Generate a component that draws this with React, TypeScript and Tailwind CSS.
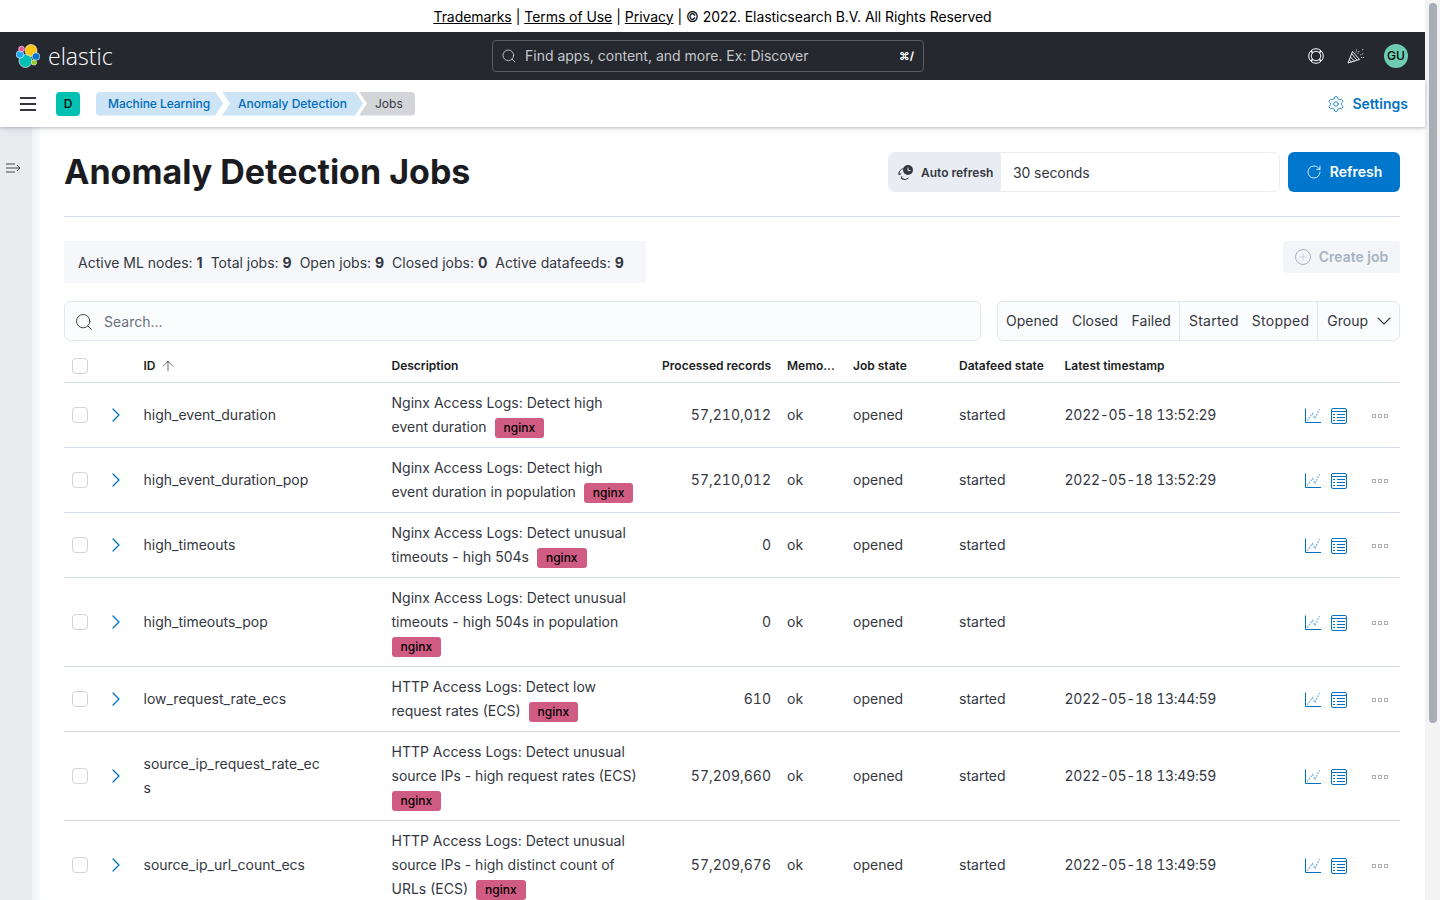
import { ArrowUp, ChevronDown, ChevronRight, Plus, RotateCw, Search, Settings } from 'lucide-react'

interface Job {
  id: string[]
  desc: string[]
  tagInline: boolean
  records: string
  timestamp: string
  height: string
}

const jobs: Job[] = [
  { id: ['high_event_duration'], desc: ['Nginx Access Logs: Detect high', 'event duration'], tagInline: true, records: '57,210,012', timestamp: '2022-05-18 13:52:29', height: 'h-[65px]' },
  { id: ['high_event_duration_pop'], desc: ['Nginx Access Logs: Detect high', 'event duration in population'], tagInline: true, records: '57,210,012', timestamp: '2022-05-18 13:52:29', height: 'h-[65px]' },
  { id: ['high_timeouts'], desc: ['Nginx Access Logs: Detect unusual', 'timeouts - high 504s'], tagInline: true, records: '0', timestamp: '', height: 'h-[65px]' },
  { id: ['high_timeouts_pop'], desc: ['Nginx Access Logs: Detect unusual', 'timeouts - high 504s in population'], tagInline: false, records: '0', timestamp: '', height: 'h-[89px]' },
  { id: ['low_request_rate_ecs'], desc: ['HTTP Access Logs: Detect low', 'request rates (ECS)'], tagInline: true, records: '610', timestamp: '2022-05-18 13:44:59', height: 'h-[65px]' },
  { id: ['source_ip_request_rate_ec', 's'], desc: ['HTTP Access Logs: Detect unusual', 'source IPs - high request rates (ECS)'], tagInline: false, records: '57,209,660', timestamp: '2022-05-18 13:49:59', height: 'h-[89px]' },
  { id: ['source_ip_url_count_ecs'], desc: ['HTTP Access Logs: Detect unusual', 'source IPs - high distinct count of', 'URLs (ECS)'], tagInline: true, records: '57,209,676', timestamp: '2022-05-18 13:49:59', height: 'h-[89px]' },
]

const columns = 'grid grid-cols-[40px_31.5px_248px_270.5px_125px_66px_106px_105.5px_233.5px_110px] items-center'

function Tag() {
  return <span className="mt-0.5 inline-block h-5 rounded-[3px] bg-[#d15c83] px-[9px] text-xs font-medium leading-5 text-black">nginx</span>
}

function Checkbox() {
  return <span className="ml-2 block h-4 w-4 rounded-[4px] border border-[#cfd3db] bg-white" />
}

function ElasticLogo() {
  return (
    <svg viewBox="0 0 24 24" className="h-6 w-6">
      <circle cx="15" cy="6.5" r="6" fill="#fec514" stroke="#fff" strokeWidth="0.6" />
      <circle cx="9.5" cy="17" r="6.5" fill="#00bfb3" stroke="#fff" strokeWidth="0.6" />
      <circle cx="4" cy="10.5" r="3.8" fill="#1ba9f5" stroke="#fff" strokeWidth="0.6" />
      <circle cx="5.5" cy="5" r="2.8" fill="#f04e98" stroke="#fff" strokeWidth="0.6" />
      <circle cx="20" cy="12.5" r="3.8" fill="#0077cc" stroke="#fff" strokeWidth="0.6" />
      <circle cx="18" cy="18.5" r="2.6" fill="#93c90e" stroke="#fff" strokeWidth="0.6" />
    </svg>
  )
}

function HelpIcon() {
  return (
    <svg viewBox="0 0 16 16" className="h-4 w-4" fill="none" stroke="#fff">
      <circle cx="8" cy="8" r="7.3" />
      <circle cx="8" cy="8" r="4.7" />
      <path d="M2.9 2.9L4.7 4.7M13.1 2.9L11.3 4.7M2.9 13.1L4.7 11.3M13.1 13.1L11.3 11.3" strokeWidth="1.6" />
    </svg>
  )
}

function NewsIcon() {
  return (
    <svg viewBox="0 0 18 16" className="h-4 w-[18px]" fill="none" stroke="#fff" strokeWidth="0.9">
      <path d="M1 15L5.5 3.5L12.5 11.5Z" />
      <path d="M3.4 9L7.5 13.2M4.7 5.7L9.8 12M2.2 12L4.6 14" />
      <path d="M9.5 1.5L9 4.5M12 3L10.5 6.5M16 1L15 3M13.5 7L16.5 5.5M14 9.5L17 9.5" strokeDasharray="1 1" />
    </svg>
  )
}

function ChartIcon() {
  return (
    <svg viewBox="0 0 16 16" className="h-4 w-4" fill="none">
      <path d="M0.5 0.5V14.5H16" stroke="#0071c2" />
      <path d="M2 13L7.5 5.5L10 10.5L14.5 1" stroke="#7fb8e1" strokeWidth="1.25" strokeDasharray="2 1" />
    </svg>
  )
}

function TableIcon() {
  return (
    <svg viewBox="0 0 16 16" className="h-4 w-4" fill="none" stroke="#0071c2">
      <rect x="0.5" y="0.5" width="15" height="15" rx="1.5" />
      <path d="M0.5 3.5H15.5M2 6.5H4M6 6.5H14M2 9.5H4M6 9.5H14M2 12.5H4M6 12.5H14" />
    </svg>
  )
}

function AutoRefreshIcon() {
  return (
    <svg viewBox="0 0 16 16" className="h-4 w-4" fill="none" stroke="#343741">
      <path d="M1 9.5A5.5 5.5 0 0 1 5.5 3.5M1 7.5L1.2 9.8L3.2 8.6M10.5 13A5.5 5.5 0 0 1 3.5 13.5M3.8 11.2L3.4 13.6L5.8 14" />
      <circle cx="10" cy="5" r="5" fill="#343741" stroke="none" />
      <path d="M10 2.5V5.5H12.5" stroke="#e9ebef" />
    </svg>
  )
}

function JobRow({ job }: { job: Job }) {
  return (
    <div className={`${columns} ${job.height} border-b border-[#d3dae6] text-sm text-[#343741]`}>
      <Checkbox />
      <ChevronRight className="h-6 w-6 text-[#0071c2]" strokeWidth={1.25} />
      <div className="pl-2 leading-6">
        {job.id.map((part) => (
          <div key={part}>{part}</div>
        ))}
      </div>
      <div className="pl-2 leading-6">
        {job.desc.map((line, i) => (
          <div key={line} className="flex h-6 items-center gap-2">
            {line}
            {job.tagInline && i === job.desc.length - 1 && <Tag />}
          </div>
        ))}
        {!job.tagInline && (
          <div className="flex h-6 items-center">
            <Tag />
          </div>
        )}
      </div>
      <div className="pr-2 text-right tabular-nums">{job.records}</div>
      <div className="pl-2">ok</div>
      <div className="pl-2">opened</div>
      <div className="pl-2">started</div>
      <div className="pl-2 tabular-nums tracking-[-0.26px]">{job.timestamp}</div>
      <div className="mt-0.5 flex items-center">
        <span className="ml-[15px] flex items-center gap-[10px]">
          <ChartIcon />
          <TableIcon />
        </span>
        <span className="ml-[25px] flex gap-[2px]">
          <i className="block h-1 w-1 border border-[#aeb1b8]" />
          <i className="block h-1 w-1 border border-[#aeb1b8]" />
          <i className="block h-1 w-1 border border-[#aeb1b8]" />
        </span>
      </div>
    </div>
  )
}

export default function App() {
  return (
    <div className="flex h-screen overflow-hidden bg-white font-['Inter',sans-serif] text-[#343741]">
      <div className="flex min-w-0 flex-1 flex-col">
        <div className="flex h-8 shrink-0 items-center justify-center gap-1 pt-px text-sm tracking-[-0.06px] text-black">
          <a className="underline">Trademarks</a>
          <span>|</span>
          <a className="underline">Terms of Use</a>
          <span>|</span>
          <a className="underline">Privacy</a>
          <span>|</span>
          <span>© 2022. Elasticsearch B.V. All Rights Reserved</span>
        </div>

        <header className="flex h-12 shrink-0 items-center bg-[#25282f] pl-4 pr-[17px] text-white">
          <div className="flex w-[476px] items-center gap-2">
            <ElasticLogo />
            <span className="font-['Open_Sans',sans-serif] text-[23px] font-light leading-none">elastic</span>
          </div>
          <div className="flex h-8 w-[432px] items-center rounded-[4px] border border-[#5a5d64] bg-[#25282f] pl-2 pr-[9px] text-sm text-[#c5c7cc]">
            <Search className="h-4 w-4 text-[#d4d6da]" strokeWidth={1.25} />
            <span className="ml-2 flex-1">Find apps, content, and more. Ex: Discover</span>
            <span className="pt-0.5 text-[11px] font-bold text-white">⌘/</span>
          </div>
          <div className="ml-auto flex items-center">
            <HelpIcon />
            <span className="ml-[23px]">
              <NewsIcon />
            </span>
            <span className="ml-[19px] flex h-6 w-6 items-center justify-center rounded-full bg-[#6dccb1] text-xs font-medium text-black">GU</span>
          </div>
        </header>

        <nav className="z-10 flex h-[47px] shrink-0 items-center bg-white pl-5 pr-[17px] shadow-[0_1px_3px_rgba(60,65,85,0.3),0_4px_8px_rgba(60,65,85,0.06)]">
          <span className="flex w-4 flex-col gap-[4px]">
            <i className="block h-0.5 bg-[#343741]" />
            <i className="block h-0.5 bg-[#343741]" />
            <i className="block h-0.5 bg-[#343741]" />
          </span>
          <span className="ml-5 flex h-6 w-6 items-center justify-center rounded-[4px] bg-[#00bfb3] text-xs font-medium text-black">D</span>
          <div className="ml-4 flex items-center text-xs font-medium">
            <span className="flex h-6 w-[127px] items-center rounded-l-[4px] bg-[#cce4f5] pl-3 tracking-[-0.05px] text-[#006bb8] [clip-path:polygon(0_0,calc(100%-8px)_0,100%_50%,calc(100%-8px)_100%,0_100%)]">Machine Learning</span>
            <span className="ml-[-1px] flex h-6 w-[141px] items-center bg-[#cce4f5] pl-4 text-[#006bb8] [clip-path:polygon(0_0,calc(100%-8px)_0,100%_50%,calc(100%-8px)_100%,0_100%,8px_50%)]">Anomaly Detection</span>
            <span className="ml-[-4px] flex h-6 w-[56px] items-center rounded-r-[4px] bg-[#d3d5d9] pl-4 font-normal text-[#343741] [clip-path:polygon(0_0,100%_0,100%_100%,0_100%,8px_50%)]">Jobs</span>
          </div>
          <div className="ml-auto flex items-center gap-[7px] text-sm font-semibold text-[#0071c2]">
            <Settings className="h-[18px] w-[18px]" strokeWidth={1.1} />
            Settings
          </div>
        </nav>

        <div className="flex min-h-0 flex-1">
          <aside className="flex w-8 shrink-0 justify-start bg-[#e9ebef] pl-[5px] pt-[35px]">
            <svg viewBox="0 0 16 12" className="h-3 w-4" fill="none" stroke="#343741" strokeWidth="0.9">
              <path d="M1 2H10M1 6H15M1 10H10M12 3L15 6L12 9" />
            </svg>
          </aside>
          <div className="w-2 shrink-0 bg-gradient-to-r from-[#f1f2f5] to-[#fafbfc]" />

          <main className="min-w-0 flex-1 overflow-hidden pl-6 pr-[25px] pt-[25px]">
            <div className="flex h-10 items-center justify-between">
              <h1 className="text-[34px] font-bold leading-10 text-[#1a1c21]">Anomaly Detection Jobs</h1>
              <div className="flex items-center gap-2">
                <div className="flex h-10 w-[392px] items-center rounded-[6px] border border-[#e9edf3] bg-white">
                  <span className="flex h-full w-[112px] items-center gap-[7px] rounded-l-[6px] bg-[#e9edf3] pl-[9px] pt-px text-xs font-semibold text-[#343741]">
                    <AutoRefreshIcon />
                    Auto refresh
                  </span>
                  <span className="pl-3 pt-px text-sm tracking-[-0.1px]">30 seconds</span>
                </div>
                <button className="flex h-10 w-28 items-center justify-center gap-2 rounded-[6px] bg-[#0077cc] text-sm font-semibold text-white">
                  <RotateCw className="h-4 w-4" strokeWidth={1.25} />
                  Refresh
                </button>
              </div>
            </div>

            <div className="mt-6 border-t border-[#d3dae6]" />

            <div className="mt-6 flex items-start justify-between">
              <div className="flex h-[42px] w-[582px] items-center gap-2 bg-[#f5f7fa] px-3.5 pt-0.5 text-sm text-[#343741]">
                <span>Active ML nodes: <b className="font-bold">1</b></span>
                <span>Total jobs: <b className="font-bold">9</b></span>
                <span>Open jobs: <b className="font-bold">9</b></span>
                <span>Closed jobs: <b className="font-bold">0</b></span>
                <span>Active datafeeds: <b className="font-bold">9</b></span>
              </div>
              <button className="flex h-8 w-[117px] items-center justify-center gap-2 rounded-[4px] bg-[#f3f5f8] text-sm font-semibold text-[#a8b2c2]">
                <span className="flex h-4 w-4 items-center justify-center rounded-full border border-[#a8b2c2]">
                  <Plus className="h-3 w-3" strokeWidth={1} />
                </span>
                Create job
              </button>
            </div>

            <div className="mt-[18px] flex gap-4">
              <div className="flex h-10 w-[917px] items-center rounded-[6px] border border-[#e3e7ef] bg-[#fbfcfd] pl-[9px] pt-0.5 text-sm text-[#69707d]">
                <Search className="h-5 w-5 text-[#343741]" strokeWidth={1.1} />
                <span className="ml-[10px]">Search...</span>
              </div>
              <div className="flex h-10 flex-1 items-center rounded-[6px] border border-[#e3e7ef] bg-[#fbfcfd] text-sm text-[#343741]">
                <div className="flex h-full items-center gap-[13.5px] border-r border-[#e3e7ef] pl-2 pr-2">
                  <span>Opened</span>
                  <span>Closed</span>
                  <span>Failed</span>
                </div>
                <div className="flex h-full items-center gap-[13px] border-r border-[#e3e7ef] pl-[9px] pr-2 tracking-[0.25px]">
                  <span>Started</span>
                  <span>Stopped</span>
                </div>
                <div className="flex flex-1 items-center justify-between pl-[9px] pr-[3px]">
                  <span>Group</span>
                  <ChevronDown className="h-6 w-6" strokeWidth={1.1} />
                </div>
              </div>
            </div>

            <div className={`${columns} mt-2 h-[34px] border-b border-[#d3dae6] text-xs font-semibold text-[#1a1c21]`}>
              <Checkbox />
              <span />
              <span className="flex items-center gap-1 pl-2">
                ID
                <ArrowUp className="h-4 w-4" strokeWidth={1} />
              </span>
              <span className="pl-2">Description</span>
              <span className="pr-2 text-right">Processed records</span>
              <span className="pl-2">Memo...</span>
              <span className="pl-2">Job state</span>
              <span className="pl-2">Datafeed state</span>
              <span className="pl-2">Latest timestamp</span>
              <span />
            </div>

            {jobs.map((job) => (
              <JobRow key={job.id[0]} job={job} />
            ))}
          </main>
        </div>
      </div>

      <div className="flex w-[15px] shrink-0 justify-center bg-[#f3f3f4] pt-[3px]">
        <div className="h-[720px] w-2 rounded-full bg-[#a9adb6]" />
      </div>
    </div>
  )
}
